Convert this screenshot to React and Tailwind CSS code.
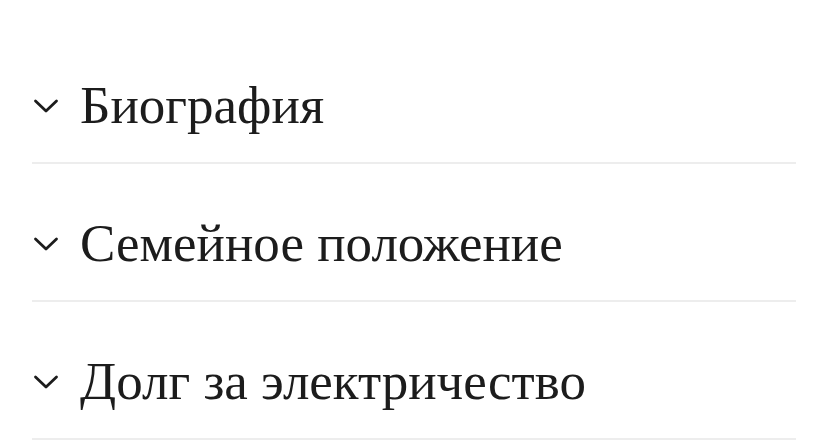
import React from "react";

const items = ["Биография", "Семейное положение", "Долг за электричество"];

function Chevron() {
  return (
    <svg width="26" height="16" viewBox="0 0 26 16" fill="none" className="shrink-0">
      <path d="M2.5 3 L13 13 L23.5 3" stroke="#1c1c1c" strokeWidth="2.8" strokeLinecap="round" strokeLinejoin="round" />
    </svg>
  );
}

export default function App() {
  return (
    <div className="w-[828px] h-[444px] bg-white overflow-hidden pt-[26px]">
      <div className="ml-[32px] w-[764px]">
        {items.map((t) => (
          <div key={t} className="border-b-2 border-[#ededed] pt-[53px] pb-[30px]">
            <div className="h-[53px] flex items-center gap-[21px] pl-[1px]">
              <Chevron />
              <span
                className="text-[53px] leading-none text-[#1c1c1c] whitespace-nowrap"
                style={{ fontFamily: '"Liberation Serif", "DejaVu Serif", serif' }}
              >
                {t}
              </span>
            </div>
          </div>
        ))}
      </div>
    </div>
  );
}
